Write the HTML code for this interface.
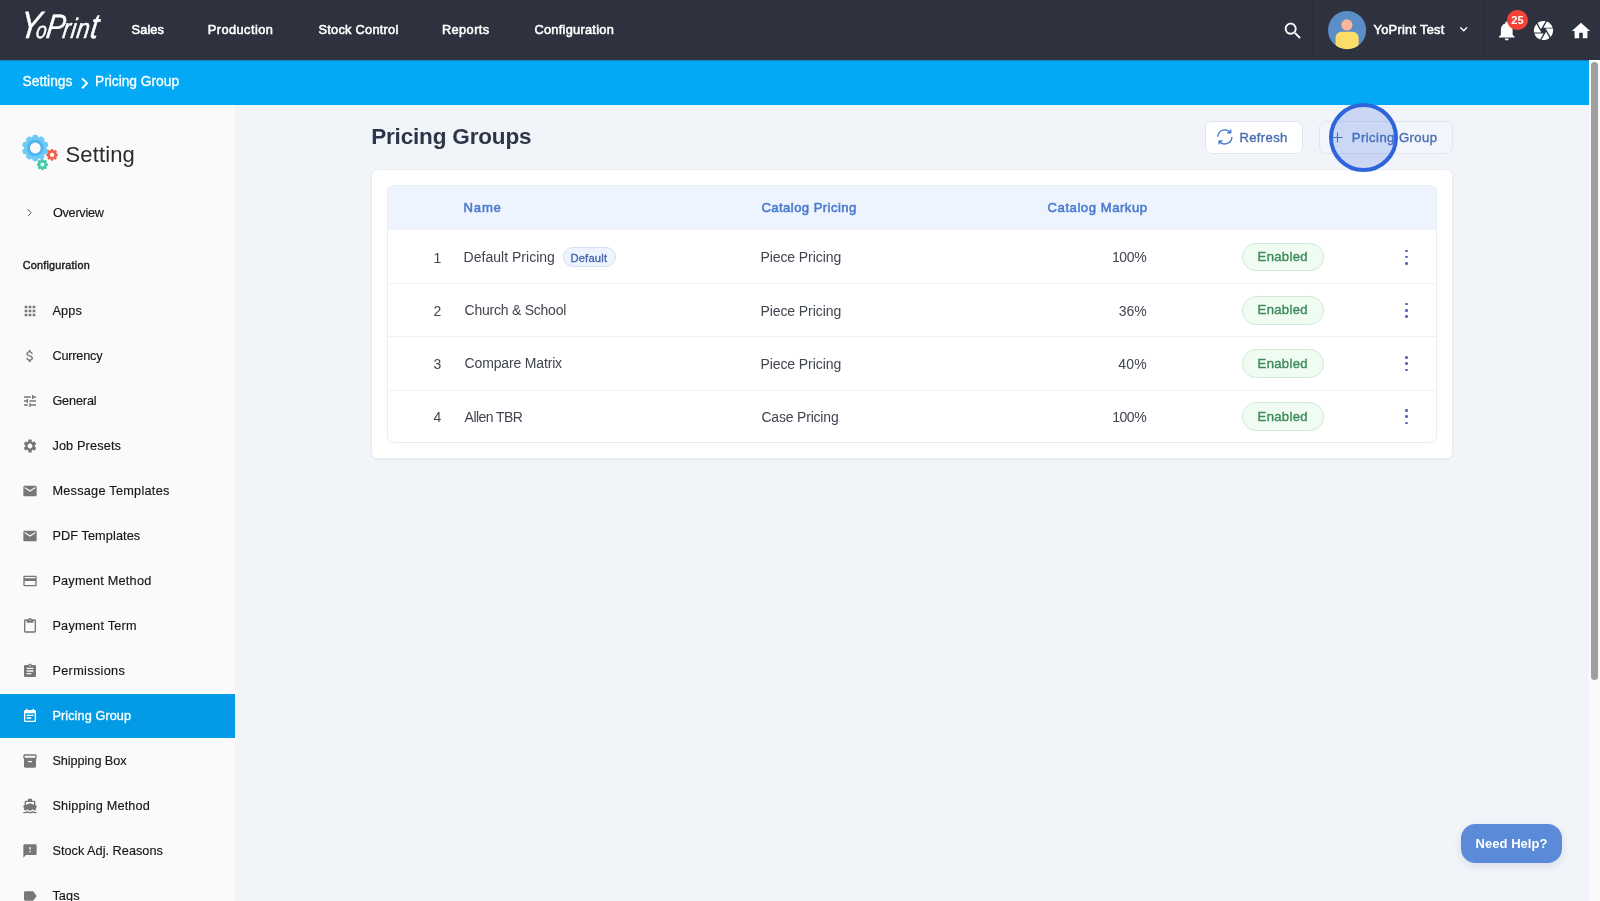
<!DOCTYPE html>
<html lang="en">
<head>
<meta charset="utf-8">
<title>Pricing Group - YoPrint</title>
<style>
*{box-sizing:border-box;margin:0;padding:0}
html,body{width:1600px;height:901px;overflow:hidden;background:#f1f4f9;font-family:"Liberation Sans",sans-serif;color:#222}
#root{position:absolute;left:0;top:0;width:1600px;height:901px;will-change:transform}
.a{position:absolute}
.t{position:absolute;white-space:nowrap}
svg{position:absolute;overflow:visible}
#nav{left:0;top:0;width:1600px;height:59.6px;background:#2d323e}
#crumb{left:0;top:59.6px;width:1588.8px;height:45.15px;background:linear-gradient(#1a6cb0,#0a9ce8 1.2px,#03a9f4 2.4px)}
#side{left:0;top:105px;width:234.5px;height:796px;background:#fafafa}
#act{left:0;top:693.6px;width:234.5px;height:44.8px;background:#039be5}
#sb{left:1588.8px;top:60px;width:11.2px;height:841px;background:#fafafa}
#sbt{left:1591.2px;top:62px;width:7px;height:618px;border-radius:3.5px;background:#9f9f9f}
#card{left:371px;top:169px;width:1082px;height:289.5px;background:#fff;border-radius:6.5px;border:1px solid #e7ebf2;box-shadow:0 1px 2px rgba(30,50,90,.05)}
#tbl{left:387px;top:185px;width:1050px;height:258.2px;background:#fff;border-radius:5.5px;border:1px solid #e9ecf2;overflow:hidden}
#th{left:-1px;top:-1px;width:1050px;height:45.3px;background:#eef4fd}
.rl{left:-1px;width:1050px;height:1px;background:#f0f2f6}
.btn{top:121.2px;height:33px;border-radius:7px;border:1px solid #e0e6f0}
.pill{left:1242.4px;width:81.2px;height:28.6px;border-radius:14.3px;background:#f0fbf2;border:1px solid #d2e9d8}
.dot{width:2.5px;height:2.5px;border-radius:50%;background:#5769b3;left:1405.25px}
#dflt{left:562.5px;top:247.4px;width:53.8px;height:20px;border-radius:10px;background:#eef4fd;border:1px solid #d6e0f4}
#help{left:1461.1px;top:823.7px;width:101px;height:39.6px;border-radius:14.5px;background:#5a8ad8;box-shadow:0 3px 8px rgba(40,60,100,.12)}
#ring{left:1329.1px;top:102.9px;width:69.3px;height:69.3px;border-radius:50%;border:4.5px solid #2e65da;background:rgba(55,105,225,.21)}
.si{fill:#757575;width:16px;height:16px;left:22.2px}

</style>
</head>
<body>
<div id="root">
<header>
<div class="a" id="nav"></div>
<div class="a" style="left:1312px;top:0;width:1px;height:60px;background:#2a2e3a"></div>
<div class="a" style="left:1483px;top:0;width:1px;height:60px;background:#2a2e3a"></div>
<svg viewBox="0 0 24 24" style="left:1282.20px;top:19.70px;width:22px;height:22px;fill:#fff;"><path d="M15.5 14h-.79l-.28-.27C15.410 12.590 16 11.110 16 9.500 16 5.910 13.090 3 9.500 3S3 5.910 3 9.500 5.910 16 9.500 16c1.610 0 3.090-.59 4.230-1.570l.27.28v.79l5 4.990L20.490 19l-4.990-5zm-6 0C7.010 14 5 11.990 5 9.500S7.010 5 9.500 5 14 7.010 14 9.500 11.990 14 9.500 14z"/></svg>
<svg viewBox="0 0 38 38" style="left:1328.1px;top:11.3px;width:38.2px;height:38.2px"><defs><clipPath id="av"><circle cx="19" cy="19" r="19"/></clipPath></defs><g clip-path="url(#av)"><rect width="38" height="38" fill="#5b8dc9"/><circle cx="18.8" cy="13.9" r="5.6" fill="#fbb59a"/><rect x="7.5" y="20.6" width="23" height="24" rx="6" fill="#fddc68"/></g></svg>
<svg viewBox="0 0 10 6" style="left:1460px;top:27.4px;width:7.4px;height:4.6px;fill:none;stroke:#fff;stroke-width:1.9;stroke-linecap:round;stroke-linejoin:round"><path d="M1 1l4 4 4-4"/></svg>
<svg viewBox="0 0 24 24" style="left:1494.65px;top:18.60px;width:23.5px;height:23.5px;fill:#fff;"><path d="M12 22c1.100 0 2-.9 2-2h-4c0 1.100.89 2 2 2zm6-6v-5c0-3.070-1.640-5.640-4.500-6.320V4c0-.83-.67-1.500-1.500-1.500s-1.500.67-1.500 1.500v.68C7.630 5.360 6 7.920 6 11v5l-2 2v1h16v-1l-2-2z"/></svg>
<div class="a" style="left:1507.4px;top:9.6px;width:20.3px;height:20.3px;border-radius:50%;background:#f44336"></div>
<svg viewBox="0 0 24 24" style="left:1532.10px;top:18.90px;width:23px;height:23px;fill:#fff;"><path d="M9.400 10.500l4.770-8.260C13.470 2.090 12.750 2 12 2c-2.400 0-4.600.85-6.320 2.250l3.660 6.350.06-.1zM21.540 9c-.92-2.920-3.150-5.260-6-6.340L11.880 9h9.660zm.26 1h-7.490l.29.5 4.760 8.250C21 16.970 22 14.610 22 12c0-.69-.07-1.350-.2-2zM8.540 12l-3.900-6.750C3.010 7.030 2 9.390 2 12c0 .69.07 1.350.2 2h7.490l-1.150-2zm-6.080 3c.92 2.920 3.150 5.260 6 6.340L12.120 15H2.460zm11.270 0l-3.900 6.760c.7.15 1.420.24 2.170.24 2.400 0 4.600-.85 6.320-2.250l-3.660-6.350-.93 1.600z"/></svg>
<svg viewBox="0 0 24 24" style="left:1570.30px;top:19.50px;width:22px;height:22px;fill:#fff;"><path d="M10 20v-6h4v6h5v-8h3L12 3 2 12h3v8z"/></svg>
<div class="t" id="logo" aria-label="YoPrint" style="left:16px;top:-0.5px;color:#fff;font-style:italic;line-height:50px;font-size:38px;-webkit-text-stroke:.45px;transform-origin:0 100%;transform:scaleX(.82) skewX(-10deg)"><span style="font-size:38px;letter-spacing:-5px">Y</span><span style="font-size:23px;letter-spacing:-.5px">o</span><span style="font-size:34px;letter-spacing:-2.5px">P</span><span style="font-size:28px;letter-spacing:.8px">rin</span><span style="font-size:35px;letter-spacing:2px">t</span></div>
<div class="t" style="left:131.60px;top:19.93px;font-size:12.8px;line-height:20px;color:#fff;letter-spacing:0.072px;-webkit-text-stroke:.55px;">Sales</div>
<div class="t" style="left:207.70px;top:19.93px;font-size:12.8px;line-height:20px;color:#fff;letter-spacing:0.449px;-webkit-text-stroke:.55px;">Production</div>
<div class="t" style="left:318.40px;top:19.93px;font-size:12.8px;line-height:20px;color:#fff;letter-spacing:0.261px;-webkit-text-stroke:.55px;">Stock Control</div>
<div class="t" style="left:441.90px;top:19.93px;font-size:12.8px;line-height:20px;color:#fff;letter-spacing:0.415px;-webkit-text-stroke:.55px;">Reports</div>
<div class="t" style="left:534.40px;top:19.93px;font-size:12.8px;line-height:20px;color:#fff;letter-spacing:0.275px;-webkit-text-stroke:.55px;">Configuration</div>
<div class="t" style="left:1373.50px;top:19.53px;font-size:12.9px;line-height:20px;color:#fff;letter-spacing:0.252px;-webkit-text-stroke:.55px;">YoPrint Test</div>
<div class="t" style="left:1511.35px;top:9.80px;font-size:11px;line-height:20px;color:#fff;font-weight:bold;letter-spacing:0.032px;">25</div>
</header>
<nav aria-label="breadcrumb">
<div class="a" id="crumb"></div>
<svg viewBox="0 0 8 12" style="left:80.6px;top:77.6px;width:7.6px;height:10.6px;fill:none;stroke:#fff;stroke-width:2.2;stroke-linecap:round;stroke-linejoin:round"><path d="M1.5 1l5 5-5 5"/></svg>
<div class="t" style="left:22.50px;top:71.50px;font-size:13.8px;line-height:20px;color:#fff;letter-spacing:0.007px;-webkit-text-stroke:.3px;">Settings</div>
<div class="t" style="left:95.00px;top:71.50px;font-size:13.8px;line-height:20px;color:#fff;letter-spacing:-0.023px;-webkit-text-stroke:.3px;">Pricing Group</div>
</nav>
<aside>
<div class="a" id="side"></div>
<div class="a" id="act"></div>
<svg viewBox="0 0 40 40" style="left:20px;top:132px;width:40px;height:40px"><g transform="translate(15.3,16.0)" fill="#6ccaf7"><circle r="11.2"/><rect x="-2.77" y="-13.20" width="5.54" height="13.20" rx="1.66" transform="rotate(0.0)"/><rect x="-2.77" y="-13.20" width="5.54" height="13.20" rx="1.66" transform="rotate(36.0)"/><rect x="-2.77" y="-13.20" width="5.54" height="13.20" rx="1.66" transform="rotate(72.0)"/><rect x="-2.77" y="-13.20" width="5.54" height="13.20" rx="1.66" transform="rotate(108.0)"/><rect x="-2.77" y="-13.20" width="5.54" height="13.20" rx="1.66" transform="rotate(144.0)"/><rect x="-2.77" y="-13.20" width="5.54" height="13.20" rx="1.66" transform="rotate(180.0)"/><rect x="-2.77" y="-13.20" width="5.54" height="13.20" rx="1.66" transform="rotate(216.0)"/><rect x="-2.77" y="-13.20" width="5.54" height="13.20" rx="1.66" transform="rotate(252.0)"/><rect x="-2.77" y="-13.20" width="5.54" height="13.20" rx="1.66" transform="rotate(288.0)"/><rect x="-2.77" y="-13.20" width="5.54" height="13.20" rx="1.66" transform="rotate(324.0)"/></g><circle cx="15.3" cy="16" r="8.3" fill="#4fb4ee"/><circle cx="15.3" cy="16" r="5.4" fill="#fafafa"/><g transform="translate(32.1,22.9)" fill="#f0634e"><circle r="4.8"/><rect x="-1.24" y="-5.90" width="2.48" height="5.90" rx="0.74" transform="rotate(0.0)"/><rect x="-1.24" y="-5.90" width="2.48" height="5.90" rx="0.74" transform="rotate(45.0)"/><rect x="-1.24" y="-5.90" width="2.48" height="5.90" rx="0.74" transform="rotate(90.0)"/><rect x="-1.24" y="-5.90" width="2.48" height="5.90" rx="0.74" transform="rotate(135.0)"/><rect x="-1.24" y="-5.90" width="2.48" height="5.90" rx="0.74" transform="rotate(180.0)"/><rect x="-1.24" y="-5.90" width="2.48" height="5.90" rx="0.74" transform="rotate(225.0)"/><rect x="-1.24" y="-5.90" width="2.48" height="5.90" rx="0.74" transform="rotate(270.0)"/><rect x="-1.24" y="-5.90" width="2.48" height="5.90" rx="0.74" transform="rotate(315.0)"/></g><circle cx="32.1" cy="22.9" r="2.1" fill="#fafafa"/><g transform="translate(22.4,32.6)" fill="#41c9a3"><circle r="4.6"/><rect x="-1.18" y="-5.60" width="2.35" height="5.60" rx="0.71" transform="rotate(0.0)"/><rect x="-1.18" y="-5.60" width="2.35" height="5.60" rx="0.71" transform="rotate(45.0)"/><rect x="-1.18" y="-5.60" width="2.35" height="5.60" rx="0.71" transform="rotate(90.0)"/><rect x="-1.18" y="-5.60" width="2.35" height="5.60" rx="0.71" transform="rotate(135.0)"/><rect x="-1.18" y="-5.60" width="2.35" height="5.60" rx="0.71" transform="rotate(180.0)"/><rect x="-1.18" y="-5.60" width="2.35" height="5.60" rx="0.71" transform="rotate(225.0)"/><rect x="-1.18" y="-5.60" width="2.35" height="5.60" rx="0.71" transform="rotate(270.0)"/><rect x="-1.18" y="-5.60" width="2.35" height="5.60" rx="0.71" transform="rotate(315.0)"/></g><circle cx="22.4" cy="32.6" r="2.0" fill="#fafafa"/></svg>
<svg viewBox="0 0 8 12" style="left:27.3px;top:209.1px;width:5.4px;height:7.4px;fill:none;stroke:#555;stroke-width:1.6;stroke-linecap:round;stroke-linejoin:round"><path d="M1.5 1l5 5-5 5"/></svg>
<svg viewBox="0 0 24 24" style="left:22.20px;top:302.70px;width:16px;height:16px;fill:#777;"><path d="M4 8h4V4H4v4zm6 12h4v-4h-4v4zm-6 0h4v-4H4v4zm0-6h4v-4H4v4zm6 0h4v-4h-4v4zm6-10v4h4V4h-4zm-6 4h4V4h-4v4zm6 6h4v-4h-4v4zm0 6h4v-4h-4v4z"/></svg>
<svg viewBox="0 0 24 24" style="left:22.20px;top:347.70px;width:16px;height:16px;fill:#777;"><path d="M11.8 10.9c-2.27-.59-3-1.2-3-2.15 0-1.09 1.01-1.85 2.7-1.85 1.78 0 2.44.85 2.5 2.1h2.21c-.07-1.72-1.12-3.3-3.21-3.81V3h-3v2.16c-1.94.42-3.5 1.68-3.5 3.61 0 2.31 1.91 3.46 4.7 4.13 2.5.6 3 1.48 3 2.41 0 .69-.49 1.79-2.7 1.79-2.06 0-2.87-.92-2.98-2.1h-2.2c.12 2.19 1.76 3.42 3.68 3.83V21h3v-2.15c1.95-.37 3.5-1.5 3.5-3.55 0-2.84-2.43-3.81-4.7-4.4z"/></svg>
<svg viewBox="0 0 24 24" style="left:22.20px;top:392.70px;width:16px;height:16px;fill:#777;"><path d="M3 17v2h6v-2H3zM3 5v2h10V5H3zm10 16v-2h8v-2h-8v-2h-2v6h2zM7 9v2H3v2h4v2h2V9H7zm14 4v-2H11v2h10zm-6-4h2V7h4V5h-4V3h-2v6z"/></svg>
<svg viewBox="0 0 24 24" style="left:22.20px;top:437.70px;width:16px;height:16px;fill:#777;"><path d="M19.14 12.94c.04-.3.06-.61.06-.94 0-.32-.02-.64-.07-.94l2.03-1.58c.18-.14.23-.41.12-.61l-1.92-3.32c-.12-.22-.37-.29-.59-.22l-2.39.96c-.5-.38-1.03-.7-1.62-.94l-.36-2.54c-.04-.24-.24-.41-.48-.41h-3.84c-.24 0-.43.17-.47.41l-.36 2.54c-.59.24-1.13.57-1.62.94l-2.39-.96c-.22-.08-.47 0-.59.22L2.74 8.87c-.12.21-.08.47.12.61l2.03 1.58c-.05.3-.09.63-.09.94s.02.64.07.94l-2.03 1.58c-.18.14-.23.41-.12.61l1.92 3.32c.12.22.37.29.59.22l2.39-.96c.5.38 1.03.7 1.62.94l.36 2.54c.05.24.24.41.48.41h3.84c.24 0 .44-.17.47-.41l.36-2.54c.59-.24 1.13-.56 1.62-.94l2.39.96c.22.08.47 0 .59-.22l1.92-3.32c.12-.22.07-.47-.12-.61l-2.01-1.58zM12 15.6c-1.98 0-3.6-1.62-3.6-3.6s1.62-3.6 3.6-3.6 3.6 1.62 3.6 3.6-1.62 3.6-3.6 3.6z"/></svg>
<svg viewBox="0 0 24 24" style="left:22.20px;top:482.70px;width:16px;height:16px;fill:#777;"><path d="M20 4H4c-1.1 0-1.99.9-1.99 2L2 18c0 1.1.9 2 2 2h16c1.1 0 2-.9 2-2V6c0-1.1-.9-2-2-2zm0 4l-8 5-8-5V6l8 5 8-5v2z"/></svg>
<svg viewBox="0 0 24 24" style="left:22.20px;top:527.70px;width:16px;height:16px;fill:#777;"><path d="M20 4H4c-1.1 0-1.99.9-1.99 2L2 18c0 1.1.9 2 2 2h16c1.1 0 2-.9 2-2V6c0-1.1-.9-2-2-2zm0 4l-8 5-8-5V6l8 5 8-5v2z"/></svg>
<svg viewBox="0 0 24 24" style="left:22.20px;top:572.70px;width:16px;height:16px;fill:#777;"><path d="M20 4H4c-1.11 0-1.99.89-1.99 2L2 18c0 1.11.89 2 2 2h16c1.11 0 2-.89 2-2V6c0-1.11-.89-2-2-2zm0 14H4v-6h16v6zm0-10H4V6h16v2z"/></svg>
<svg viewBox="0 0 24 24" style="left:22.20px;top:617.70px;width:16px;height:16px;fill:#777;"><path d="M19 2h-4.18C14.4.84 13.3 0 12 0c-1.3 0-2.4.84-2.82 2H5c-1.1 0-2 .9-2 2v16c0 1.1.9 2 2 2h14c1.1 0 2-.9 2-2V4c0-1.1-.9-2-2-2zm-7 0c.55 0 1 .45 1 1s-.45 1-1 1-1-.45-1-1 .45-1 1-1zm7 18H5V4h2v3h10V4h2v16z"/></svg>
<svg viewBox="0 0 24 24" style="left:22.20px;top:662.70px;width:16px;height:16px;fill:#777;"><path d="M19 3h-4.18C14.4 1.84 13.3 1 12 1c-1.3 0-2.4.84-2.82 2H5c-1.1 0-2 .9-2 2v14c0 1.1.9 2 2 2h14c1.1 0 2-.9 2-2V5c0-1.1-.9-2-2-2zm-7 0c.55 0 1 .45 1 1s-.45 1-1 1-1-.45-1-1 .45-1 1-1zm2 14H7v-2h7v2zm3-4H7v-2h10v2zm0-4H7V7h10v2z"/></svg>
<svg viewBox="0 0 24 24" style="left:22.20px;top:707.70px;width:16px;height:16px;fill:#fff;"><path d="M17 10H7v2h10v-2zm2-7h-1V1h-2v2H8V1H6v2H5c-1.11 0-1.99.9-1.99 2L3 19c0 1.1.89 2 2 2h14c1.1 0 2-.9 2-2V5c0-1.1-.9-2-2-2zm0 16H5V8h14v11zm-5-5H7v2h7v-2z"/></svg>
<svg viewBox="0 0 24 24" style="left:22.20px;top:752.70px;width:16px;height:16px;fill:#777;"><path d="M20 2H4c-1 0-2 .9-2 2v3.01c0 .72.43 1.34 1 1.69V20c0 1.1 1.1 2 2 2h14c.9 0 2-.9 2-2V8.7c.57-.35 1-.97 1-1.69V4c0-1.1-1-2-2-2zm-5 12H9v-2h6v2zm5-7H4V4h16v3z"/></svg>
<svg viewBox="0 0 24 24" style="left:22.20px;top:797.70px;width:16px;height:16px;fill:#777;"><path d="M20 21c-1.39 0-2.78-.47-4-1.32-2.44 1.71-5.56 1.71-8 0C6.78 20.53 5.39 21 4 21H2v2h2c1.38 0 2.74-.35 4-.99 2.52 1.29 5.48 1.29 8 0 1.26.65 2.62.99 4 .99h2v-2h-2zM3.95 19H4c1.6 0 3.02-.88 4-2 .98 1.12 2.4 2 4 2s3.02-.88 4-2c.98 1.12 2.4 2 4 2h.05l1.89-6.68c.08-.26.06-.54-.06-.78s-.34-.42-.6-.5L20 10.62V6c0-1.1-.9-2-2-2h-3V1H9v3H6c-1.1 0-2 .9-2 2v4.620l-1.29.42c-.26.08-.48.26-.6.5s-.15.52-.06.78L3.950 19zM6 6h12v3.970L12 8 6 9.970V6z"/></svg>
<svg viewBox="0 0 24 24" style="left:22.20px;top:842.70px;width:16px;height:16px;fill:#777;"><path d="M20 2H4c-1.1 0-1.990.9-1.990 2L2 22l4-4h14c1.100 0 2-.9 2-2V4c0-1.100-.9-2-2-2zm-7 12h-2v-2h2v2zm0-4h-2V6h2v4z"/></svg>
<svg viewBox="0 0 24 24" style="left:22.20px;top:887.70px;width:16px;height:16px;fill:#777;"><path d="M17.630 5.840C17.270 5.330 16.670 5 16 5L5 5.010C3.900 5.010 3 5.900 3 7v10c0 1.100.9 1.990 2 1.990L16 19c.67 0 1.270-.33 1.630-.84L22 12l-4.370-6.160z"/></svg>
<div class="t" style="left:65.50px;top:144.50px;font-size:22px;line-height:20px;color:#2b2b2b;letter-spacing:0.124px;">Setting</div>
<div class="t" style="left:52.90px;top:203.08px;font-size:12.7px;line-height:20px;color:#161616;letter-spacing:-0.259px;-webkit-text-stroke:.15px;">Overview</div>
<div class="t" style="left:22.70px;top:255.39px;font-size:10.8px;line-height:20px;color:#1a1a1a;letter-spacing:0.232px;-webkit-text-stroke:.4px;">Configuration</div>
<div class="t" style="left:52.40px;top:300.68px;font-size:12.7px;line-height:20px;color:#161616;letter-spacing:0.142px;-webkit-text-stroke:.15px;">Apps</div>
<div class="t" style="left:52.40px;top:345.68px;font-size:12.7px;line-height:20px;color:#161616;letter-spacing:-0.175px;-webkit-text-stroke:.15px;">Currency</div>
<div class="t" style="left:52.40px;top:390.68px;font-size:12.7px;line-height:20px;color:#161616;letter-spacing:-0.153px;-webkit-text-stroke:.15px;">General</div>
<div class="t" style="left:52.40px;top:435.68px;font-size:12.7px;line-height:20px;color:#161616;letter-spacing:0.155px;-webkit-text-stroke:.15px;">Job Presets</div>
<div class="t" style="left:52.40px;top:480.68px;font-size:12.7px;line-height:20px;color:#161616;letter-spacing:0.270px;-webkit-text-stroke:.15px;">Message Templates</div>
<div class="t" style="left:52.40px;top:525.68px;font-size:12.7px;line-height:20px;color:#161616;letter-spacing:0.110px;-webkit-text-stroke:.15px;">PDF Templates</div>
<div class="t" style="left:52.40px;top:570.68px;font-size:12.7px;line-height:20px;color:#161616;letter-spacing:0.226px;-webkit-text-stroke:.15px;">Payment Method</div>
<div class="t" style="left:52.40px;top:615.68px;font-size:12.7px;line-height:20px;color:#161616;letter-spacing:0.244px;-webkit-text-stroke:.15px;">Payment Term</div>
<div class="t" style="left:52.40px;top:660.68px;font-size:12.7px;line-height:20px;color:#161616;letter-spacing:0.335px;-webkit-text-stroke:.15px;">Permissions</div>
<div class="t" style="left:52.40px;top:705.68px;font-size:12.7px;line-height:20px;color:#fff;letter-spacing:0.091px;-webkit-text-stroke:.3px;">Pricing Group</div>
<div class="t" style="left:52.40px;top:750.68px;font-size:12.7px;line-height:20px;color:#161616;letter-spacing:-0.048px;-webkit-text-stroke:.15px;">Shipping Box</div>
<div class="t" style="left:52.40px;top:795.68px;font-size:12.7px;line-height:20px;color:#161616;letter-spacing:0.159px;-webkit-text-stroke:.15px;">Shipping Method</div>
<div class="t" style="left:52.40px;top:840.68px;font-size:12.7px;line-height:20px;color:#161616;letter-spacing:0.025px;-webkit-text-stroke:.15px;">Stock Adj. Reasons</div>
<div class="t" style="left:52.40px;top:885.68px;font-size:12.7px;line-height:20px;color:#161616;letter-spacing:0.115px;-webkit-text-stroke:.15px;">Tags</div>
</aside>
<main>
<div class="a" id="card"></div>
<div class="a" id="tbl"><div class="a" id="th"></div><div class="a rl" style="top:97px"></div><div class="a rl" style="top:150.4px"></div><div class="a rl" style="top:203.7px"></div></div>
<div class="a btn" style="left:1205.4px;width:97.6px;background:#fff"></div>
<div class="a btn" style="left:1318.6px;width:134.4px;background:#f2f6fc"></div>
<svg viewBox="0 0 16 16" style="left:1216.6px;top:129.4px;width:15.8px;height:15.8px;fill:none;stroke:#4a7bd0;stroke-width:1.35;stroke-linecap:round;stroke-linejoin:round"><path d="M0.92 7.5A7.1 7.1 0 0 1 13.74 3.83M13.9 0.9V4H10.8M15.08 8.5A7.1 7.1 0 0 1 2.26 12.17M2.1 15.1V12H5.2"/></svg>
<svg viewBox="0 0 12 12" style="left:1332.1px;top:132.1px;width:11px;height:11px;fill:none;stroke:#4b6fb3;stroke-width:1.15"><path d="M6 .5v11M.5 6h11"/></svg>
<div class="a" id="dflt"></div>
<div class="a pill" style="top:242.8px"></div>
<div class="a dot" style="top:249.70px"></div>
<div class="a dot" style="top:255.95px"></div>
<div class="a dot" style="top:262.20px"></div>
<div class="a pill" style="top:296.0px"></div>
<div class="a dot" style="top:302.87px"></div>
<div class="a dot" style="top:309.12px"></div>
<div class="a dot" style="top:315.37px"></div>
<div class="a pill" style="top:349.1px"></div>
<div class="a dot" style="top:356.04px"></div>
<div class="a dot" style="top:362.29px"></div>
<div class="a dot" style="top:368.54px"></div>
<div class="a pill" style="top:402.3px"></div>
<div class="a dot" style="top:409.21px"></div>
<div class="a dot" style="top:415.46px"></div>
<div class="a dot" style="top:421.71px"></div>
<div class="t" style="left:371.20px;top:126.96px;font-size:22.5px;line-height:20px;color:#2d3648;font-weight:bold;letter-spacing:-0.170px;">Pricing Groups</div>
<div class="t" style="left:1239.40px;top:127.64px;font-size:13.1px;line-height:20px;color:#4b6fb3;letter-spacing:0.356px;-webkit-text-stroke:.4px;">Refresh</div>
<div class="t" style="left:1351.75px;top:127.64px;font-size:13.1px;line-height:20px;color:#4b6fb3;letter-spacing:0.436px;-webkit-text-stroke:.4px;">Pricing Group</div>
<div class="t" style="left:463.60px;top:197.84px;font-size:13.1px;line-height:20px;color:#4a7ace;letter-spacing:0.785px;-webkit-text-stroke:.55px;">Name</div>
<div class="t" style="left:761.40px;top:197.84px;font-size:13.1px;line-height:20px;color:#4a7ace;letter-spacing:0.435px;-webkit-text-stroke:.55px;">Catalog Pricing</div>
<div class="t" style="left:1047.60px;top:197.84px;font-size:13.1px;line-height:20px;color:#4a7ace;letter-spacing:0.542px;-webkit-text-stroke:.55px;">Catalog Markup</div>
<div class="t" style="left:433.60px;top:247.55px;font-size:14px;line-height:20px;color:#40454f;">1</div>
<div class="t" style="left:463.60px;top:246.85px;font-size:14px;line-height:20px;color:#40454f;letter-spacing:0.018px;">Default Pricing</div>
<div class="t" style="left:760.40px;top:247.35px;font-size:14px;line-height:20px;color:#40454f;letter-spacing:-0.076px;">Piece Pricing</div>
<div class="t" style="left:1111.95px;top:247.45px;font-size:14px;line-height:20px;color:#40454f;letter-spacing:-0.353px;">100%</div>
<div class="t" style="left:1257.60px;top:247.24px;font-size:13.1px;line-height:20px;color:#3d8b5c;letter-spacing:0.322px;-webkit-text-stroke:.4px;">Enabled</div>
<div class="t" style="left:433.60px;top:300.72px;font-size:14px;line-height:20px;color:#40454f;">2</div>
<div class="t" style="left:464.60px;top:300.32px;font-size:14px;line-height:20px;color:#40454f;letter-spacing:-0.239px;">Church &amp; School</div>
<div class="t" style="left:760.40px;top:300.52px;font-size:14px;line-height:20px;color:#40454f;letter-spacing:-0.076px;">Piece Pricing</div>
<div class="t" style="left:1118.85px;top:300.62px;font-size:14px;line-height:20px;color:#40454f;letter-spacing:-0.086px;">36%</div>
<div class="t" style="left:1257.60px;top:300.41px;font-size:13.1px;line-height:20px;color:#3d8b5c;letter-spacing:0.322px;-webkit-text-stroke:.4px;">Enabled</div>
<div class="t" style="left:433.60px;top:353.89px;font-size:14px;line-height:20px;color:#40454f;">3</div>
<div class="t" style="left:464.60px;top:353.49px;font-size:14px;line-height:20px;color:#40454f;letter-spacing:-0.160px;">Compare Matrix</div>
<div class="t" style="left:760.40px;top:353.69px;font-size:14px;line-height:20px;color:#40454f;letter-spacing:-0.076px;">Piece Pricing</div>
<div class="t" style="left:1118.35px;top:353.79px;font-size:14px;line-height:20px;color:#40454f;letter-spacing:0.164px;">40%</div>
<div class="t" style="left:1257.60px;top:353.58px;font-size:13.1px;line-height:20px;color:#3d8b5c;letter-spacing:0.322px;-webkit-text-stroke:.4px;">Enabled</div>
<div class="t" style="left:433.60px;top:407.06px;font-size:14px;line-height:20px;color:#40454f;">4</div>
<div class="t" style="left:464.60px;top:406.66px;font-size:14px;line-height:20px;color:#40454f;letter-spacing:-0.551px;">Allen TBR</div>
<div class="t" style="left:761.40px;top:406.86px;font-size:14px;line-height:20px;color:#40454f;letter-spacing:-0.189px;">Case Pricing</div>
<div class="t" style="left:1112.15px;top:406.96px;font-size:14px;line-height:20px;color:#40454f;letter-spacing:-0.419px;">100%</div>
<div class="t" style="left:1257.60px;top:406.75px;font-size:13.1px;line-height:20px;color:#3d8b5c;letter-spacing:0.322px;-webkit-text-stroke:.4px;">Enabled</div>
<div class="t" style="left:570.40px;top:247.65px;font-size:11.25px;line-height:20px;color:#3f63a8;letter-spacing:0.163px;-webkit-text-stroke:.3px;">Default</div>
<div class="a" id="ring"></div>
</main>
<div role="button">
<div class="a" id="help"></div>
<div class="t" style="left:1475.60px;top:833.68px;font-size:13px;line-height:20px;color:#fff;font-weight:bold;letter-spacing:0.036px;">Need Help?</div>
</div>
<div aria-hidden="true">
<div class="a" id="sb"></div><div class="a" id="sbt"></div>
</div>
</div>
</body>
</html>
